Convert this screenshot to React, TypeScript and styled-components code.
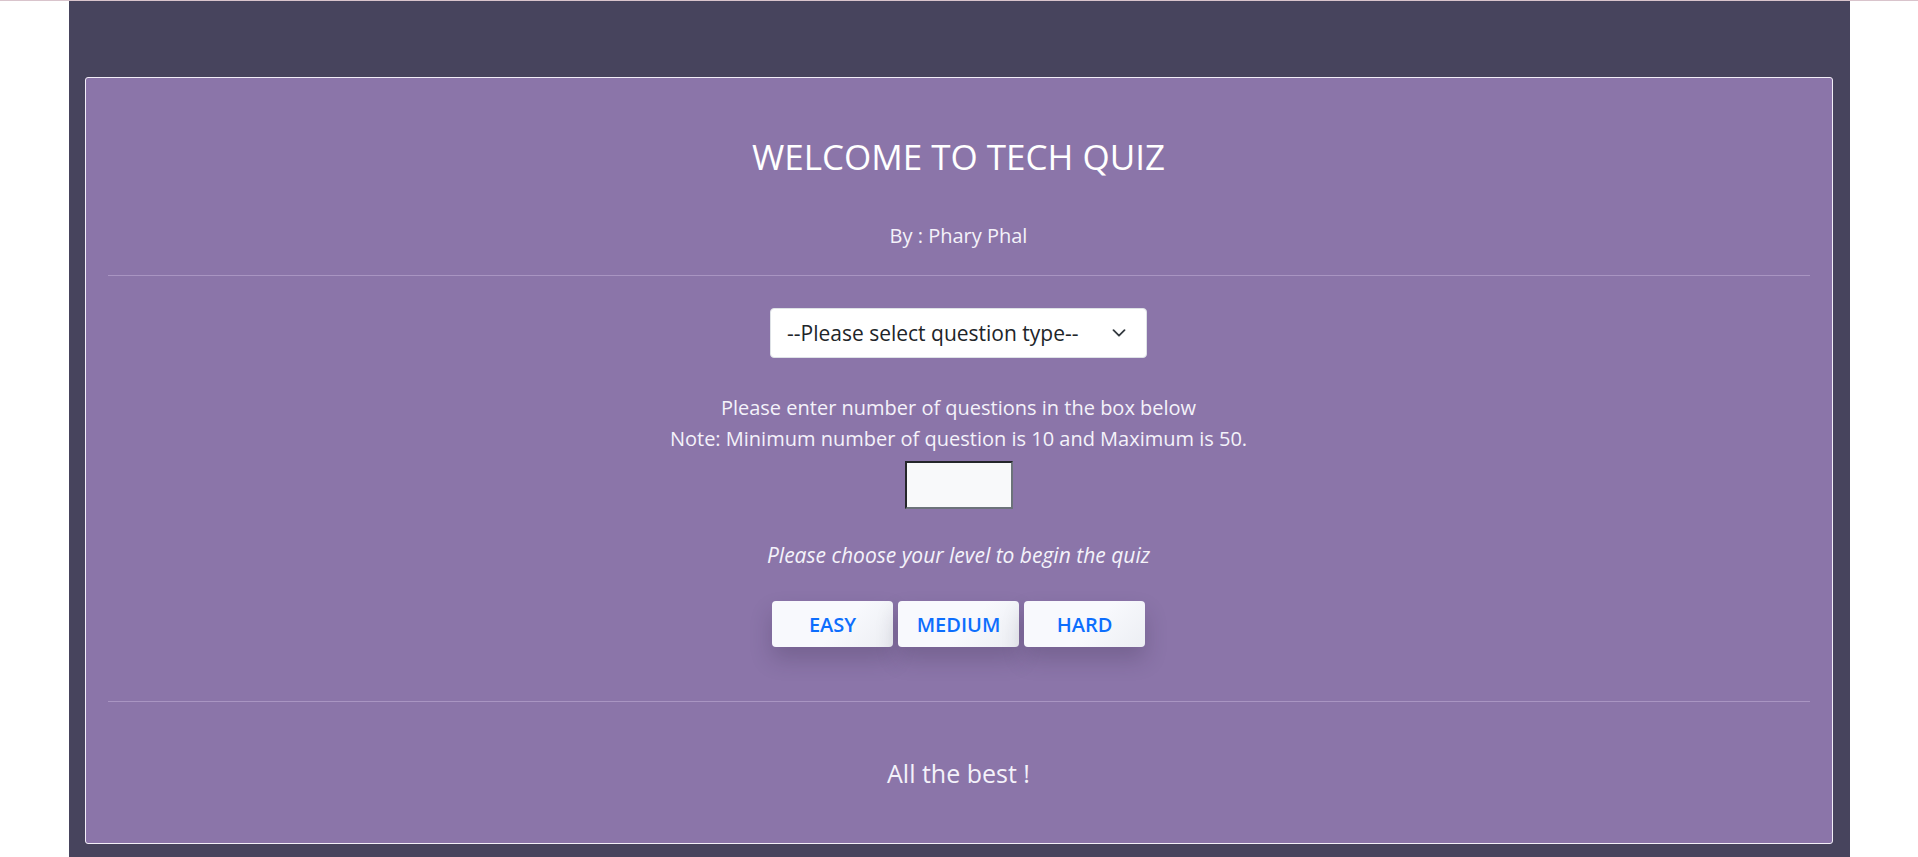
import React from "react";
import styled, {createGlobalStyle} from "styled-components";

const GlobalStyle = createGlobalStyle`
  body {
    margin: 0;
    background: #ffffff;
    border-top: 1px solid #d9c4cc;
    font-family: "Open Sans", "Noto Sans", sans-serif;
  }
`;

const Page = styled.div`
  width: 1781px;
  margin: 0 auto;
  background: #47445d;
  padding: 76px 17px 40px 16px;
  box-sizing: border-box;
`;

const Card = styled.div`
  display: flex;
  flex-direction: column;
  align-items: center;
  background: #8b75a9;
  border: 1px solid #f3eff8;
  border-radius: 3px;
  padding: 0 22px 52px;
  color: #f4f2fa;
  text-align: center;
`;

const Title = styled.h1`
  margin: 58px 0 0;
  font-size: 35px;
  font-weight: 400;
  line-height: 41px;
  color: #ffffff;
`;

const Author = styled.p`
  margin: 45px 0 0;
  font-size: 20px;
  line-height: 28px;
`;

const Divider = styled.hr<{gap: number}>`
  align-self: stretch;
  margin: ${p => p.gap}px 0 0;
  border: 0;
  border-top: 1px solid #a995c2;
`;

const SelectWrap = styled.div`
  position: relative;
  margin-top: 32px;
`;

const Select = styled.select`
  appearance: none;
  width: 377px;
  height: 50px;
  padding: 0 46px 0 16px;
  border: 1px solid #dee2e6;
  border-radius: 4px;
  background: #ffffff;
  color: #212529;
  font-family: "Open Sans", "Noto Sans", sans-serif;
  font-size: 21px;
`;

const Chevron = styled.svg`
  position: absolute;
  right: 21px;
  top: 21px;
  pointer-events: none;
`;

const Info = styled.p`
  margin: 34px 0 0;
  font-size: 20px;
  line-height: 31px;
`;

const CountInput = styled.input`
  margin-top: 7px;
  width: 108px;
  height: 48px;
  box-sizing: border-box;
  border: 2px solid #6c737a;
  border-top-color: #25262a;
  border-left-color: #25262a;
  background: #f8f9fa;
`;

const Hint = styled.p`
  margin: 32px 0 0;
  font-size: 21px;
  line-height: 28px;
  font-style: italic;
`;

const Levels = styled.div`
  display: flex;
  gap: 5px;
  margin-top: 32px;
`;

const LevelButton = styled.button`
  width: 121px;
  height: 46px;
  border: 0;
  border-radius: 4px;
  background: linear-gradient(135deg, #f8f9fd 55%, #eceef3);
  box-shadow: 0 12px 22px rgba(40, 30, 60, 0.22);
  color: #0d6efd;
  font-family: "Open Sans", "Noto Sans", sans-serif;
  font-size: 20px;
  font-weight: 600;
  cursor: pointer;
`;

const Closing = styled.p`
  margin: 53px 0 0;
  font-size: 25px;
  line-height: 36px;
`;

function App() {
  const [count, setCount] = React.useState("");
  const levels = ["EASY", "MEDIUM", "HARD"];

  return (
    <>
      <GlobalStyle />
      <Page>
        <Card>
          <Title>WELCOME TO TECH QUIZ</Title>
          <Author>By : Phary Phal</Author>
          <Divider gap={25} />
          <SelectWrap>
            <Select defaultValue="">
              <option value="">--Please select question type--</option>
              <option value="linux">Linux</option>
              <option value="devops">DevOps</option>
              <option value="code">Code</option>
            </Select>
            <Chevron width="14" height="8" viewBox="0 0 14 8">
              <path d="M1.5 1.2l5.5 5.5 5.5-5.5" fill="none" stroke="#343a40" strokeWidth="1.8" strokeLinecap="round" strokeLinejoin="round" />
            </Chevron>
          </SelectWrap>
          <Info>
            Please enter number of questions in the box below
            <br />
            Note: Minimum number of question is 10 and Maximum is 50.
          </Info>
          <CountInput type="text" value={count} onChange={e => setCount(e.target.value)} />
          <Hint>Please choose your level to begin the quiz</Hint>
          <Levels>
            {levels.map(l => (
              <LevelButton key={l}>{l}</LevelButton>
            ))}
          </Levels>
          <Divider gap={54} />
          <Closing>All the best !</Closing>
        </Card>
      </Page>
    </>
  );
}

export default App;
